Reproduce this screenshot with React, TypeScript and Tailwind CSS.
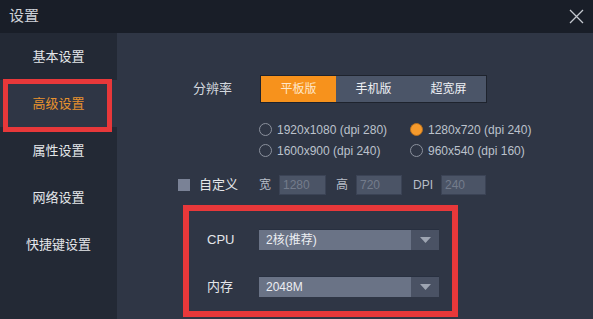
import { useState } from 'react';

const NAV = ['基本设置', '高级设置', '属性设置', '网络设置', '快捷键设置'];
const MODES = ['平板版', '手机版', '超宽屏'];
const RESOLUTIONS = [
  ['1920x1080 (dpi 280)', '1280x720 (dpi 240)'],
  ['1600x900 (dpi 240)', '960x540 (dpi 160)'],
];

function Radio({ checked, label }: { checked: boolean; label: string }) {
  return (
    <div className="flex items-center gap-[5px] w-[151px]">
      {checked ? (
        <span className="w-[13px] h-[13px] rounded-full border border-[#b9711f] bg-[#f59a2c] shrink-0" />
      ) : (
        <span className="w-[13px] h-[13px] rounded-full border border-[#8b919d] shrink-0" />
      )}
      <span className="text-[12px] text-[#bcc2cc]">{label}</span>
    </div>
  );
}

function Select({ value }: { value: string }) {
  return (
    <div className="flex h-[21px] w-[180px] border-t border-[#283040]">
      <div className="flex-1 bg-[#6a7386] flex items-center pl-[7px] text-[12px] text-[#eceef2]">
        {value}
      </div>
      <div className="w-[28px] bg-[#4a5264] flex items-center justify-center">
        <svg width="11" height="6" viewBox="0 0 11 6">
          <path d="M0 0 L11 0 L5.5 6 Z" fill="#9ea5b2" />
        </svg>
      </div>
    </div>
  );
}

function NumInput({ value, w }: { value: string; w: string }) {
  return (
    <div className={`${w} h-[20px] bg-[#4b5466] border border-[#3b4355] flex items-center pl-[3px] text-[12px] text-[#747c8c]`}>
      {value}
    </div>
  );
}

export default function App() {
  const [mode, setMode] = useState(0);
  const [active, setActive] = useState(1);

  return (
    <div
      className="relative w-[593px] h-[319px] overflow-hidden bg-[#2f3645] flex flex-col"
      style={{ fontFamily: '"Liberation Sans", "Noto Sans CJK SC", sans-serif' }}
    >
      <div className="h-[33px] shrink-0 bg-[#191e28] flex items-center justify-between pl-[9px] pr-[9px]">
        <span className="text-[15px] text-[#cfd2d8]">设置</span>
        <svg width="15" height="15" viewBox="0 0 15 15">
          <path d="M1 1 L14 14 M14 1 L1 14" stroke="#c4c8cf" strokeWidth="1.3" />
        </svg>
      </div>

      <div className="flex flex-1">
        <div className="w-[117px] bg-[#232935] flex flex-col">
          {NAV.map((item, i) => (
            <button
              key={item}
              onClick={() => setActive(i)}
              className={`h-[47px] flex items-center justify-center text-[13px] ${
                i === active ? 'bg-[#2f3645] text-[#e8922e]' : 'text-[#e4e6ea]'
              }`}
            >
              {item}
            </button>
          ))}
        </div>

        <div className="flex-1 flex flex-col">
          <div className="mt-[42px] h-[28px] flex items-center">
            <span className="pl-[76px] w-[143px] text-[13px] text-[#d4d8de]">分辨率</span>
            <div className="flex h-[28px] border border-[#1e232d]">
              {MODES.map((m, i) => (
                <button
                  key={m}
                  onClick={() => setMode(i)}
                  className={`w-[75px] text-[12px] ${
                    i === mode ? 'bg-[#f7921c] text-[#ffe7c9]' : 'bg-[#4b5568] text-[#eef0f4]'
                  }`}
                >
                  {m}
                </button>
              ))}
            </div>
          </div>

          <div className="mt-[16px] pl-[142px] flex flex-col">
            {RESOLUTIONS.map((row, r) => (
              <div key={r} className="h-[21px] flex items-center">
                <Radio checked={false} label={row[0]} />
                <Radio checked={r === 0} label={row[1]} />
              </div>
            ))}
          </div>

          <div className="mt-[14px] h-[20px] flex items-center">
            <span className="ml-[61px] w-[12px] h-[12px] bg-[#7a8296]" />
            <span className="ml-[9px] w-[60px] text-[13px] text-[#e4e6ea]">自定义</span>
            <span className="text-[12px] text-[#b8bec8] w-[20px]">宽</span>
            <NumInput value="1280" w="w-[47px]" />
            <span className="ml-[10px] text-[12px] text-[#b8bec8] w-[20px]">高</span>
            <NumInput value="720" w="w-[46px]" />
            <span className="ml-[11px] text-[12px] text-[#b8bec8] w-[28px]">DPI</span>
            <NumInput value="240" w="w-[45px]" />
          </div>

          <div className="mt-[34px] flex items-center">
            <span className="pl-[90px] w-[142px] text-[13px] text-[#e4e6ea]">CPU</span>
            <Select value="2核(推荐)" />
          </div>

          <div className="mt-[26px] flex items-center">
            <span className="pl-[90px] w-[142px] text-[13px] text-[#e4e6ea]">内存</span>
            <Select value="2048M" />
          </div>
        </div>
      </div>

      <div className="absolute left-[3px] top-[79px] w-[109px] h-[53px] border-[5px] border-[#e8383a]" />
      <div className="absolute left-[183px] top-[205px] w-[275px] h-[112px] border-[6px] border-[#e8383a]" />
    </div>
  );
}
